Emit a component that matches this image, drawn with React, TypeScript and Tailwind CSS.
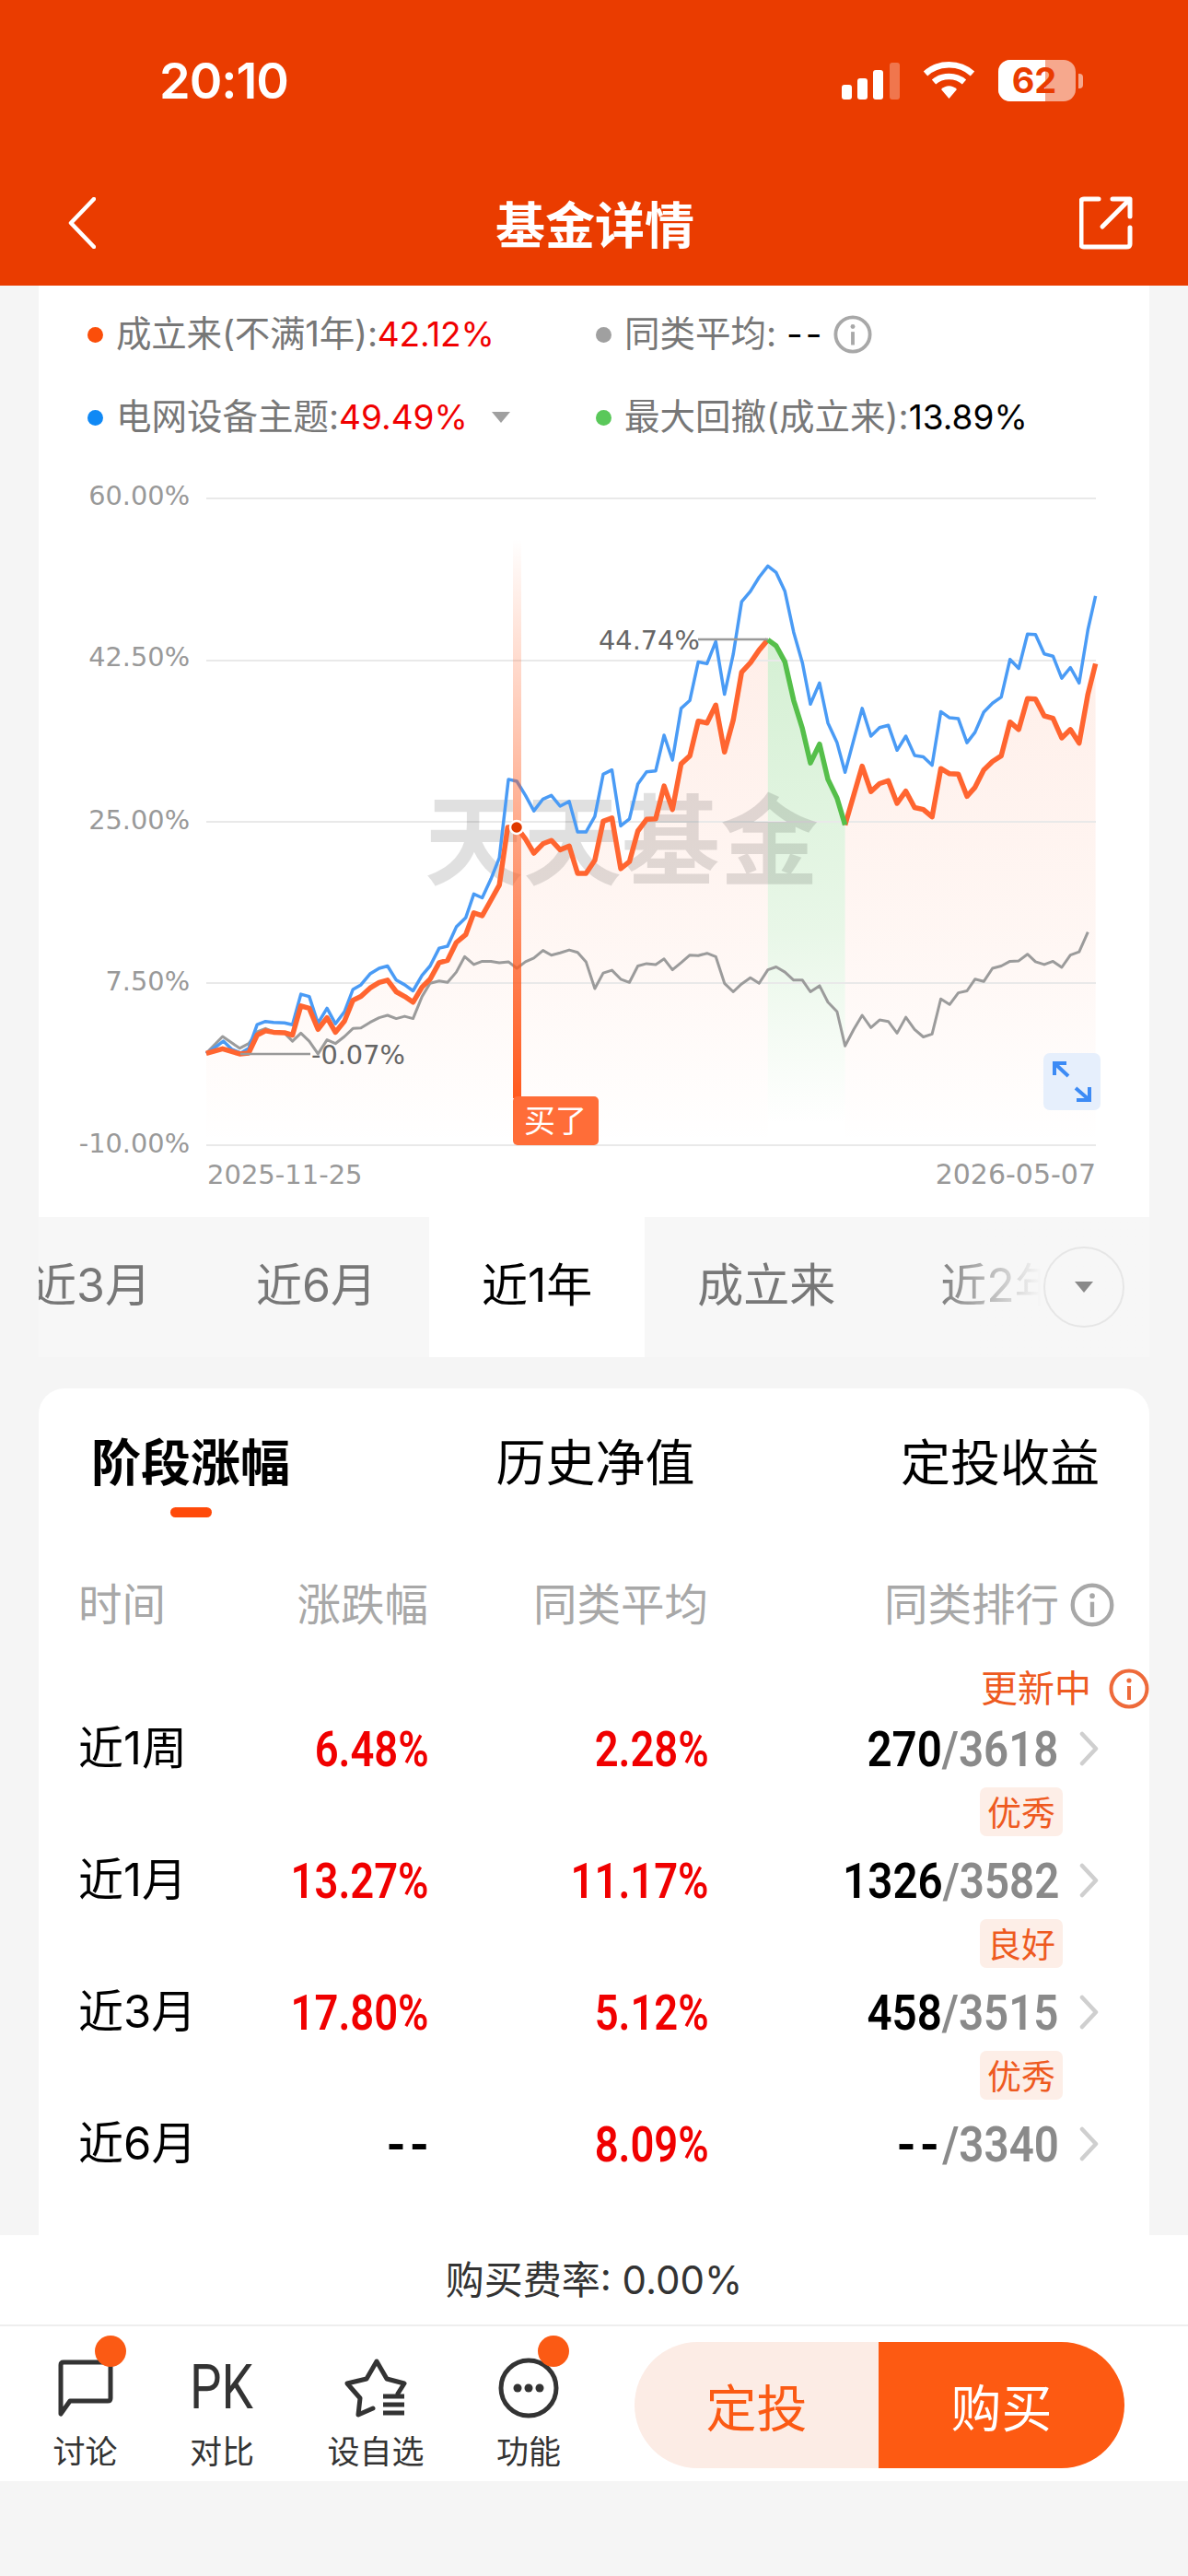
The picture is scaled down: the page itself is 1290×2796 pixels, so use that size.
import React from "react";

const lx = (v: number) => 40 + v / 2.529;
const rx = (v: number) => 640 + v / 2.529;
const yy = (v: number) => 500 + v / 1.96;
const conv = (left: number[], right: number[]) => {
  const out: [number, number][] = [];
  for (let i = 0; i < left.length; i += 2) out.push([lx(left[i]), yy(left[i + 1])]);
  for (let i = 0; i < right.length; i += 2) out.push([rx(right[i]), yy(right[i + 1])]);
  return out;
};
const str = (p: [number, number][]) => p.map((q) => q[0].toFixed(1) + "," + q[1].toFixed(1)).join(" ");

const orangeA = conv(
  [465,1261,510,1251,557,1262,582,1260,605,1222,628,1213,650,1216,680,1217,702,1222,725,1160,748,1165,772,1210,797,1185,820,1216,845,1192,868,1148,890,1140,915,1122,940,1110,963,1105,987,1130,1010,1140,1033,1152,1058,1120,1080,1103,1105,1068,1128,1063,1152,1025,1178,1008,1200,962,1223,968,1247,935,1270,903,1293,780,1318,780,1342,805,1365,835,1390,815,1413,808,1437,828,1462,820,1485,878,1508,878],
  [15,850,38,767,62,760,86,868,110,853,133,788,157,763,182,762,205,692,228,742,252,645,276,628,299,554,323,558,347,520,371,620,395,552,418,450,442,430,466,403,490,381]
);
const green = conv([], [490,381,513,394,537,428,561,510,585,570,607,643,632,603,655,678,680,718,702,775]);
const orangeB = conv([], [702,775,749,650,773,704,797,687,821,681,845,729,869,703,893,738,917,742,941,758,965,655,989,666,1013,667,1037,714,1059,695,1083,658,1107,640,1131,628,1155,556,1179,572,1203,506,1225,507,1249,543,1273,548,1297,590,1321,572,1345,601,1369,497,1390,432]);
const blue = conv(
  [465,1261,490,1248,512,1235,535,1252,560,1260,582,1250,605,1200,628,1193,650,1195,680,1196,702,1200,725,1135,748,1140,772,1197,797,1165,820,1198,845,1172,868,1125,890,1115,915,1092,940,1080,963,1075,987,1105,1010,1115,1033,1128,1058,1095,1080,1075,1105,1037,1128,1033,1152,992,1178,972,1200,922,1223,930,1247,890,1270,845,1295,678,1318,682,1342,712,1365,745,1390,720,1413,712,1437,735,1462,725,1485,790,1508,790],
  [15,757,38,667,62,658,86,777,110,762,133,688,157,662,182,660,205,584,228,637,252,527,276,510,299,428,323,432,347,385,371,497,395,412,418,300,442,278,466,248,490,224,513,238,537,278,561,365,585,430,607,518,632,473,655,558,680,600,702,663,749,527,773,586,797,568,821,563,845,616,869,586,893,627,917,630,941,648,965,534,989,547,1013,549,1037,600,1059,578,1083,535,1107,516,1131,503,1155,423,1179,442,1203,369,1225,370,1249,411,1273,416,1297,463,1321,440,1345,473,1369,360,1390,288]
);
const gray = conv(
  [465,1261,510,1225,557,1250,582,1240,605,1215,628,1208,650,1215,680,1218,702,1235,725,1218,748,1235,772,1262,797,1232,820,1240,845,1225,868,1208,890,1207,915,1195,940,1185,963,1180,987,1187,1010,1182,1033,1187,1058,1140,1080,1112,1105,1107,1128,1110,1152,1088,1175,1055,1200,1072,1223,1065,1247,1065,1270,1068,1295,1066,1318,1080,1342,1066,1365,1058,1390,1042,1413,1052,1437,1047,1462,1041,1485,1046,1508,1066],
  [15,1123,38,1090,62,1084,86,1103,110,1110,133,1075,157,1070,182,1072,205,1060,228,1083,252,1068,276,1052,299,1053,323,1048,347,1055,371,1112,395,1130,418,1113,442,1100,466,1112,490,1083,513,1077,537,1088,561,1105,585,1105,607,1130,632,1117,655,1152,680,1172,702,1245,726,1210,749,1180,773,1206,797,1190,821,1193,845,1218,869,1184,893,1210,917,1226,941,1220,965,1145,989,1157,1013,1132,1037,1128,1059,1103,1083,1108,1107,1080,1131,1075,1155,1065,1179,1064,1203,1050,1225,1066,1249,1072,1273,1065,1297,1078,1321,1052,1345,1045,1369,1003]
);
const B = 1243;
const area = (p: [number, number][]) => str([[p[0][0], B], ...p, [p[p.length - 1][0], B]]);
const DJ = "'DejaVu Sans', sans-serif";

function Chart() {
  const gridY = [541, 717, 892, 1067, 1243];
  const labels: [string, number][] = [["60.00%", 548], ["42.50%", 723], ["25.00%", 900], ["7.50%", 1075], ["-10.00%", 1251]];
  return (
    <svg viewBox="42 500 1206 821" width="1206" height="821" className="block">
      <defs>
        <linearGradient id="ga" gradientUnits="userSpaceOnUse" x1="0" y1="694" x2="0" y2="1243">
          <stop offset="0" stopColor="#fb5a1e" stopOpacity="0.1" />
          <stop offset="0.6" stopColor="#fb5a1e" stopOpacity="0.05" />
          <stop offset="1" stopColor="#fb5a1e" stopOpacity="0" />
        </linearGradient>
        <linearGradient id="gg" gradientUnits="userSpaceOnUse" x1="0" y1="694" x2="0" y2="1220">
          <stop offset="0" stopColor="#4fc04a" stopOpacity="0.24" />
          <stop offset="0.6" stopColor="#4fc04a" stopOpacity="0.13" />
          <stop offset="1" stopColor="#4fc04a" stopOpacity="0" />
        </linearGradient>
        <linearGradient id="gm" gradientUnits="userSpaceOnUse" x1="0" y1="585" x2="0" y2="1192">
          <stop offset="0" stopColor="#ff5a1e" stopOpacity="0" />
          <stop offset="0.45" stopColor="#ff5a1e" stopOpacity="0.45" />
          <stop offset="1" stopColor="#ff5a1e" stopOpacity="1" />
        </linearGradient>
      </defs>
      <polygon points={area(orangeA)} fill="url(#ga)" />
      <polygon points={area(orangeB)} fill="url(#ga)" />
      <polygon points={area(green)} fill="url(#gg)" />
      {gridY.map((y) => (
        <line key={y} x1="224" x2="1190" y1={y} y2={y} stroke="#e9e9e9" strokeWidth="2" />
      ))}
      <text x="461" y="952" fontSize="107" fontWeight="700" fill="#000" fillOpacity="0.12" fontFamily="'Noto Sans CJK SC', sans-serif">天天基金</text>
      {labels.map(([t, y]) => (
        <text key={t} x="206" y={y} textAnchor="end" fontSize="28.8" fill="#999" fontFamily={DJ}>{t}</text>
      ))}
      <text x="225" y="1285" fontSize="29" fill="#999" fontFamily={DJ}>2025-11-25</text>
      <text x="1190" y="1285" textAnchor="end" fontSize="30" fill="#999" fontFamily={DJ}>2026-05-07</text>
      <polyline points={str(gray)} fill="none" stroke="#9b9b9b" strokeWidth="3" strokeLinejoin="round" />
      <polyline points={str(blue)} fill="none" stroke="#4a9bf5" strokeWidth="3.5" strokeLinejoin="round" />
      <rect x="557" y="585" width="9" height="607" fill="url(#gm)" />
      <polyline points={str(orangeA)} fill="none" stroke="#ff6530" strokeWidth="5.5" strokeLinejoin="round" />
      <polyline points={str(orangeB)} fill="none" stroke="#ff6530" strokeWidth="5.5" strokeLinejoin="round" />
      <polyline points={str(green)} fill="none" stroke="#55bf4a" strokeWidth="5.5" strokeLinejoin="round" />
      <circle cx="561" cy="898" r="7" fill="#e03a00" stroke="#fff" strokeWidth="2.5" />
      <line x1="261" x2="337" y1="1144" y2="1144" stroke="#999" strokeWidth="2.5" />
      <text x="338" y="1155" fontSize="28.8" fill="#666" fontFamily={DJ}>-0.07%</text>
      <line x1="758" x2="834" y1="694" y2="694" stroke="#999" strokeWidth="2.5" />
      <text x="650" y="705" fontSize="28.8" fill="#666" fontFamily={DJ}>44.74%</text>
      <rect x="557" y="1190" width="93" height="53" rx="5" fill="#ff6d38" />
      <text x="569" y="1229" fontSize="34" fill="#fff" fontFamily="'Noto Sans CJK SC', sans-serif">买了</text>
      <rect x="1133" y="1143" width="62" height="62" rx="7" fill="#e6effc" />
      <g fill="none" stroke="#3d8bf5" strokeWidth="4">
        <path d="M1145 1167 V1154 H1158 M1145 1154 L1160 1168" />
        <path d="M1183 1180 V1194 H1169 M1183 1194 L1168 1181" />
      </g>
    </svg>
  );
}

function Info({ size, color }: { size: number; color: string }) {
  return (
    <svg width={size} height={size} viewBox="0 0 44 44" fill="none" className="shrink-0">
      <circle cx="22" cy="22" r="19.5" stroke={color} strokeWidth="4" />
      <rect x="20" y="19" width="4" height="15" fill={color} />
      <circle cx="22" cy="13" r="2.6" fill={color} />
    </svg>
  );
}

function Dot({ color }: { color: string }) {
  return <span className="w-[17px] h-[17px] rounded-full shrink-0" style={{ background: color }} />;
}

const NUM = "[font-family:'Roboto',sans-serif] font-semibold text-[54px]";
const Dash = () => <span className="inline-block tracking-[4px] mr-[-4px] font-bold text-black">--</span>;

function Rank({ a, b, tag }: { a: string; b: string; tag?: string }) {
  return (
    <div className="flex flex-col items-end">
      <div className="h-[60px] flex items-center">
        {a === "--" ? (
          <>
            <Dash />
            <span className="inline-block origin-right scale-x-[0.88] text-[#8a8a8a] ml-[-14px]">/{b}</span>
          </>
        ) : (
          <span className="inline-block origin-right scale-x-[0.88]">
            <span className="text-black">{a}</span>
            <span className="text-[#8a8a8a]">/{b}</span>
          </span>
        )}
      </div>
      {tag && (
        <div className="mt-[12px] mr-[-4px] w-[90px] h-[53px] rounded-[7px] bg-[#fdeee7] text-[#ee5a1f] text-[37px] font-normal flex items-center justify-center [font-family:'Noto_Sans_CJK_SC',sans-serif]">
          {tag}
        </div>
      )}
    </div>
  );
}

function Val({ w, v }: { w: string; v: string }) {
  return (
    <div className={w + " h-[60px] flex items-center justify-end text-[#f00000] " + NUM}>
      {v === "--" ? <Dash /> : <span className="inline-block origin-right scale-x-[0.84]">{v}</span>}
    </div>
  );
}

function Row({ label, v1, v2, a, b, tag }: { label: string; v1: string; v2: string; a: string; b: string; tag?: string }) {
  return (
    <div className="h-[143px] flex items-start pl-[43px]">
      <div className="w-[216px] h-[60px] flex items-center text-[49px] text-black">{label}</div>
      <Val w="w-[165px]" v={v1} />
      <Val w="w-[304px]" v={v2} />
      <div className={"w-[380px] " + NUM}>
        <Rank a={a} b={b} tag={tag} />
      </div>
      <div className="ml-[22px] h-[60px] flex items-center">
        <svg width="21" height="38" viewBox="0 0 21 38" fill="none">
          <path d="M3 3 L18 19 L3 35" stroke="#cfcfcf" strokeWidth="4.5" strokeLinecap="round" strokeLinejoin="round" />
        </svg>
      </div>
    </div>
  );
}

function Tool({ label, badge, children }: { label: string; badge?: boolean; children: React.ReactNode }) {
  return (
    <div className="relative flex flex-col items-center">
      <div className="h-[70px] flex items-center justify-center">{children}</div>
      <div className="mt-[12px] text-[35px] leading-[44px] text-[#333] whitespace-nowrap">{label}</div>
      {badge && <span className="absolute left-1/2 ml-[10px] top-[-22px] w-[34px] h-[34px] rounded-full bg-[#fb5a14]" />}
    </div>
  );
}

export default function App() {
  return (
    <div className="w-[1290px] h-[2796px] bg-[#f5f5f5] flex flex-col overflow-hidden [font-family:Inter,'Noto_Sans_CJK_SC',sans-serif]">
      <header className="h-[310px] bg-[#ea3c00] text-white shrink-0">
        <div className="h-[174px] flex items-center justify-between pl-[173px] pr-[114px]">
          <span className="text-[54px] font-semibold tracking-[-1px]">20:10</span>
          <div className="flex items-end gap-[25px] h-[46px]">
            <svg width="63" height="40" viewBox="0 0 63 40" className="mb-[2px]">
              <rect x="0" y="24" width="11" height="16" rx="3" fill="#fff" />
              <rect x="17" y="17" width="11" height="23" rx="3" fill="#fff" />
              <rect x="34" y="8" width="11" height="32" rx="3" fill="#fff" />
              <rect x="52" y="0" width="11" height="40" rx="3" fill="#fff" fillOpacity="0.3" />
            </svg>
            <svg width="57" height="42" viewBox="0 0 57 42" fill="none" className="mb-[2px]">
              <path d="M3 14 C17 1 40 1 54 14" stroke="#fff" strokeWidth="6.5" />
              <path d="M12 23 C21 15 36 15 45 23" stroke="#fff" strokeWidth="6.5" />
              <path d="M20 31 L28.5 41 L37 31 C32 26 25 26 20 31 Z" fill="#fff" />
            </svg>
            <div className="flex items-center">
              <div className="relative w-[84px] h-[45px] rounded-[13px] overflow-hidden bg-[#f6a88d]">
                <div className="h-full w-[51px] bg-white" />
                <span className="absolute inset-0 pr-[6px] flex items-center justify-center text-[#ea3c00] text-[38px] font-bold">62</span>
              </div>
              <div className="ml-[3px] w-[5px] h-[16px] rounded-r-[4px] bg-[#f6a88d]" />
            </div>
          </div>
        </div>
        <div className="h-[136px] flex items-center justify-between pl-[74px] pr-[60px]">
          <div className="w-[46px]">
            <svg width="30" height="56" viewBox="0 0 30 56" fill="none">
              <path d="M28 2 L3 28 L28 54" stroke="#fff" strokeWidth="4.5" strokeLinecap="round" strokeLinejoin="round" />
            </svg>
          </div>
          <span className="text-[54px] font-bold leading-none [font-family:'Noto_Sans_CJK_SC',sans-serif]">基金详情</span>
          <svg width="58" height="58" viewBox="0 0 58 58" fill="none">
            <path d="M21 3 H5 Q2 3 2 6 V52 Q2 55 5 55 H51 Q55 55 55 52 V34" stroke="#fff" strokeWidth="5" strokeLinecap="round" />
            <path d="M25 33 L54 4 M36 3 H55 V22" stroke="#fff" strokeWidth="5" strokeLinecap="round" strokeLinejoin="round" />
          </svg>
        </div>
      </header>

      <main className="flex-none h-[2116px] flex flex-col mx-[42px] w-[1206px]">
        <section className="bg-white h-[1011px] shrink-0">
          <div className="h-[190px] pt-[28px] pl-[53px] flex flex-col gap-[40px] text-[38.5px] text-[#777]">
            <div className="flex h-[50px] items-center">
              <div className="w-[552px] flex items-center gap-[14px]">
                <Dot color="#fb4e0a" />
                <span className="tracking-[-0.2px]">成立来(不满1年):<span className="text-[#f00000] text-[37px]">42.12%</span></span>
              </div>
              <div className="flex items-center gap-[14px]">
                <Dot color="#a0a0a0" />
                <span>同类平均: <span className="text-black tracking-[3px]">--</span></span>
                <span className="ml-[-4px]"><Info size={42} color="#a8a8a8" /></span>
              </div>
            </div>
            <div className="flex h-[50px] items-center">
              <div className="w-[552px] flex items-center gap-[14px]">
                <Dot color="#1089f5" />
                <span>电网设备主题:<span className="text-[#f00000] text-[37px]">49.49%</span></span>
                <svg width="20" height="12" viewBox="0 0 20 12" className="ml-[12px]"><path d="M0 0 H20 L10 12 Z" fill="#a0a0a0" /></svg>
              </div>
              <div className="flex items-center gap-[14px]">
                <Dot color="#5ac85a" />
                <span>最大回撤(成立来):<span className="text-black text-[37px]">13.89%</span></span>
              </div>
            </div>
          </div>
          <Chart />
        </section>

        <div className="relative h-[152px] shrink-0 bg-[#f7f7f7] overflow-hidden">
          <div className="flex h-full items-stretch ml-[-66px] text-[50px] text-[#777]">
            {["近3月", "近6月", "近1年", "成立来", "近2年"].map((t) => (
              <div key={t} className={"flex items-center px-[57px] pb-[4px] whitespace-nowrap " + (t === "近1年" ? "bg-white text-black" : "")}>{t}</div>
            ))}
          </div>
          <div className="absolute right-0 top-0 bottom-0 w-[235px] bg-gradient-to-r from-transparent via-[#f7f7f7] to-[#f7f7f7]" />
          <div className="absolute right-[27px] top-[32px] w-[88px] h-[88px] rounded-full border-2 border-[#e6e6e6] flex items-center justify-center">
            <svg width="20" height="12" viewBox="0 0 20 12"><path d="M0 0 H20 L10 12 Z" fill="#8a8a8a" /></svg>
          </div>
        </div>

        <section className="mt-[34px] flex-1 bg-white rounded-t-[28px] pt-[43px] overflow-hidden">
          <div className="flex justify-between pl-[57px] pr-[54px] text-[54px] text-black [font-family:'Noto_Sans_CJK_SC',sans-serif]">
            <div className="flex flex-col items-center">
              <span className="h-[70px] leading-[70px] font-bold">阶段涨幅</span>
              <span className="mt-[16px] w-[45px] h-[11px] rounded-full bg-[#ff4a0a]" />
            </div>
            <span className="h-[70px] leading-[70px]">历史净值</span>
            <span className="h-[70px] leading-[70px]">定投收益</span>
          </div>

          <div className="mt-[65px] h-[60px] flex items-center pl-[43px] text-[47.5px] text-[#a8a8a8]">
            <span className="w-[215px]">时间</span>
            <span className="w-[165px] text-right whitespace-nowrap">涨跌幅</span>
            <span className="w-[304px] text-right whitespace-nowrap">同类平均</span>
            <span className="w-[381px] text-right whitespace-nowrap">同类排行</span>
            <span className="ml-[12px]"><Info size={48} color="#a8a8a8" /></span>
          </div>

          <div className="mt-[36px] h-[50px] flex items-center justify-end gap-[19px] text-[40px] text-[#ee5a1f]">
            <span>更新中</span>
            <Info size={44} color="#ee6a3a" />
          </div>

          <div className="mt-[10px]">
            <Row label="近1周" v1="6.48%" v2="2.28%" a="270" b="3618" tag="优秀" />
            <Row label="近1月" v1="13.27%" v2="11.17%" a="1326" b="3582" tag="良好" />
            <Row label="近3月" v1="17.80%" v2="5.12%" a="458" b="3515" tag="优秀" />
            <Row label="近6月" v1="--" v2="8.09%" a="--" b="3340" />
          </div>
        </section>
      </main>

      <footer className="h-[267px] bg-white shrink-0 flex flex-col">
        <div className="h-[97px] flex items-center justify-center text-[42px] text-[#333]">购买费率:&nbsp;0.00%</div>
        <div className="flex-1 border-t-2 border-[#eeeeee] flex items-start pt-[17px]">
          <div className="flex items-start pt-[15px] pl-[59px] w-[689px] shrink-0">
            <div className="w-[67px]">
              <Tool label="讨论" badge>
                <svg width="60" height="62" viewBox="0 0 60 62" fill="none">
                  <path d="M3 59 V6 Q3 3 6 3 H54 Q57 3 57 6 V42 Q57 45 54 45 H13 L3 59 Z" stroke="#333" strokeWidth="5" strokeLinejoin="round" />
                </svg>
              </Tool>
            </div>
            <div className="ml-[82px] w-[66px]">
              <Tool label="对比">
                <span className="inline-block scale-x-[0.83] text-[66px] leading-none text-[#333] font-normal [font-family:'Roboto',sans-serif]">PK</span>
              </Tool>
            </div>
            <div className="ml-[84px] w-[100px]">
              <Tool label="设自选">
                <svg width="68" height="64" viewBox="0 0 68 64" fill="none">
                  <path d="M58 38 L65 27 L46 22 L35 3 L24 22 L3 27 L17 43 L15 61 L31 54" stroke="#333" strokeWidth="5" strokeLinecap="round" strokeLinejoin="round" />
                  <path d="M42 41 H65 M42 50 H65 M42 59 H65" stroke="#333" strokeWidth="5" />
                </svg>
              </Tool>
            </div>
            <div className="ml-[83px] w-[66px]">
              <Tool label="功能" badge>
                <svg width="66" height="66" viewBox="0 0 66 66" fill="none">
                  <circle cx="33" cy="33" r="30" stroke="#333" strokeWidth="5" />
                  <circle cx="21" cy="33" r="4.5" fill="#333" />
                  <circle cx="33" cy="33" r="4.5" fill="#333" />
                  <circle cx="45" cy="33" r="4.5" fill="#333" />
                </svg>
              </Tool>
            </div>
          </div>
          <div className="flex h-[137px] w-[532px] rounded-full overflow-hidden text-[55px] [font-family:'Noto_Sans_CJK_SC',sans-serif]">
            <div className="w-[265px] bg-[#fcece5] text-[#fb5a14] flex items-center justify-center">定投</div>
            <div className="flex-1 bg-[#fd5a12] text-white flex items-center justify-center">购买</div>
          </div>
        </div>
      </footer>
    </div>
  );
}
